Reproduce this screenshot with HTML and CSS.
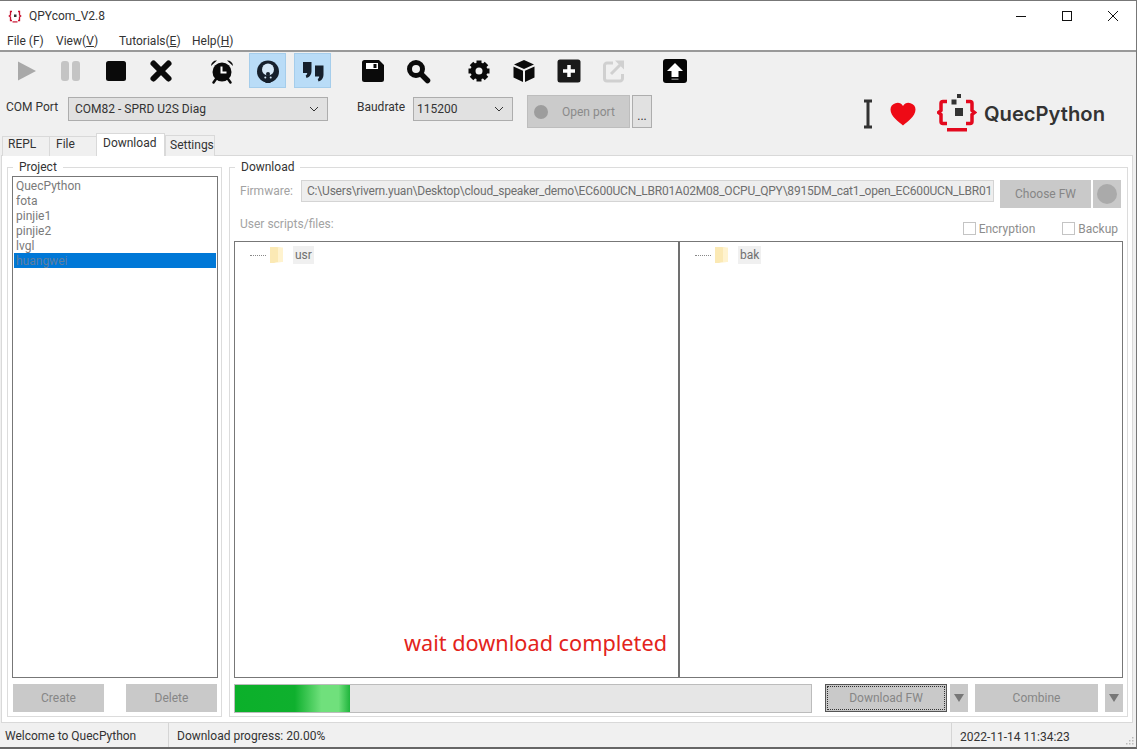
FILE: index.html
```html
<!DOCTYPE html>
<html lang="en">
<head>
    <meta charset="UTF-8">
    <title>QPYcom_V2.8</title>
    <link rel="stylesheet" href="styles.css">
</head>
<body>
    <div class="window">
        <div class="titlebar">
            <svg class="app-icon" width="14" height="14" viewBox="0 0 14 14">
                <path d="M4 2.500H2.500V6L1.300 7l1.200 1V11.500H4M10 2.500h1.500V6l1.200 1-1.200 1v3.500H10" fill="none" stroke="#c8102e" stroke-width="1.300"/>
                <rect x="6" y="5.500" width="2.500" height="2.500" fill="#333"/>
                <rect x="4.500" y="12.300" width="5" height="1.200" fill="#c8102e"/>
            </svg>
            <span class="app-title">QPYcom_V2.8</span>
            <div class="win-buttons">
                <svg width="12" height="12" viewBox="0 0 12 12"><path d="M1 6.500h10" stroke="#111" stroke-width="1"/></svg>
                <svg width="12" height="12" viewBox="0 0 12 12"><rect x="1.500" y="1.500" width="9" height="9" fill="none" stroke="#111"/></svg>
                <svg width="12" height="12" viewBox="0 0 12 12"><path d="M1 1l10 10M11 1L1 11" stroke="#111" stroke-width="1"/></svg>
            </div>
        </div>

        <div class="menubar">
            <span class="menu-file">File (F)</span>
            <span class="menu-view">View(<u>V</u>)</span>
            <span class="menu-tut">Tutorials(<u>E</u>)</span>
            <span class="menu-help">Help(<u>H</u>)</span>
        </div>

        <div class="toolbar">
            <div class="tool">
                <svg width="30" height="30" viewBox="0 0 30 30"><path d="M6 5.500L24 15 6 24.500z" fill="#a9a9a9"/></svg>
            </div>
            <div class="tool tool-pause">
                <svg width="30" height="30" viewBox="0 0 30 30"><rect x="5" y="5" width="8" height="20" rx="3" fill="#c4c4c4"/><rect x="16" y="5" width="8" height="20" rx="3" fill="#c4c4c4"/></svg>
            </div>
            <div class="tool">
                <svg width="30" height="30" viewBox="0 0 30 30"><rect x="5" y="5" width="20" height="20" rx="2.500" fill="#0a0a0a"/></svg>
            </div>
            <div class="tool">
                <svg width="30" height="30" viewBox="0 0 30 30"><path d="M7.500 7.500l15 15M22.500 7.500l-15 15" stroke="#0a0a0a" stroke-width="6" stroke-linecap="round"/></svg>
            </div>
            <div class="tool gap">
                <svg width="30" height="30" viewBox="0 0 30 30">
                    <circle cx="15" cy="16" r="9.500" fill="#0a0a0a"/>
                    <path d="M14.500 10.500v6h5" fill="none" stroke="#fff" stroke-width="2"/>
                    <path d="M4 10A5.500 5.500 0 0 1 10 4.500zM26 10A5.500 5.500 0 0 0 20 4.500z" fill="#0a0a0a"/>
                    <path d="M9 23l-2.500 3.500M21 23l2.500 3.500" stroke="#0a0a0a" stroke-width="2.500" stroke-linecap="round"/>
                </svg>
            </div>
            <div class="tool active tool-face">
                <svg width="30" height="30" viewBox="0 0 30 30">
                    <circle cx="15" cy="15.500" r="11" fill="#16202c"/>
                    <circle cx="15" cy="13.500" r="6" fill="#d5e8f7"/>
                    <circle cx="15" cy="18" r="2" fill="#16202c"/>
                    <path d="M10.500 25l2-4.500h5l2 4.500-2.500 2h-4z" fill="#16202c"/>
                    <circle cx="12.300" cy="21.500" r="1" fill="#d5e8f7"/>
                    <circle cx="17.700" cy="21.500" r="1" fill="#d5e8f7"/>
                </svg>
            </div>
            <div class="tool active tool-quote">
                <svg width="30" height="30" viewBox="0 0 30 30">
                    <path d="M5 6h8.500v9c0 3-1.500 6-5 7l-.8-2.500c1-.5 1.500-1.500 1.500-2.500H5z" fill="#16202c"/>
                    <path d="M17 9.500h8.500v9c0 3-1.500 6-5 7l-.8-2.500c1-.5 1.500-1.500 1.500-2.500H17z" fill="#16202c"/>
                </svg>
            </div>
            <div class="tool gap">
                <svg width="30" height="30" viewBox="0 0 30 30">
                    <path d="M6.500 4h14.500l5 5v14.500a2.500 2.500 0 0 1-2.500 2.500h-17A2.500 2.500 0 0 1 4 23.500v-17A2.500 2.500 0 0 1 6.500 4z" fill="#0a0a0a"/>
                    <rect x="8" y="7" width="12" height="6" fill="#fff"/>
                    <rect x="15.500" y="8" width="3" height="4" fill="#0a0a0a"/>
                </svg>
            </div>
            <div class="tool">
                <svg width="30" height="30" viewBox="0 0 30 30">
                    <circle cx="13" cy="13" r="6.500" fill="none" stroke="#0a0a0a" stroke-width="5"/>
                    <path d="M18.500 18.500l6 6" stroke="#0a0a0a" stroke-width="5.500" stroke-linecap="round"/>
                </svg>
            </div>
            <div class="tool gap">
                <svg width="30" height="30" viewBox="0 0 30 30">
                    <circle cx="15" cy="15" r="6" fill="none" stroke="#0a0a0a" stroke-width="5"/>
                    <g stroke="#0a0a0a" stroke-width="5">
                        <path d="M15 4.500v4M15 21.500v4M4.500 15h4M21.500 15h4M7.500 7.500l3 3M19.500 19.500l3 3M22.500 7.500l-3 3M10.500 19.500l-3 3"/>
                    </g>
                </svg>
            </div>
            <div class="tool">
                <svg width="30" height="30" viewBox="0 0 30 30">
                    <path d="M15 4l10 4.500L15 13 5 8.500z" fill="#0a0a0a"/>
                    <path d="M4.500 10.500l9.500 4.300V26L4.500 21.500zM25.500 10.500L16 14.800V26l9.500-4.500z" fill="#0a0a0a"/>
                </svg>
            </div>
            <div class="tool">
                <svg width="30" height="30" viewBox="0 0 30 30">
                    <rect x="3.500" y="3.500" width="23" height="23" rx="2.500" fill="#1a1a1a"/>
                    <path d="M15 9v12M9 15h12" stroke="#fff" stroke-width="3.500"/>
                </svg>
            </div>
            <div class="tool">
                <svg width="30" height="30" viewBox="0 0 30 30">
                    <path d="M14 7H8a2.500 2.500 0 0 0-2.500 2.500v13A2.500 2.500 0 0 0 8 25h13a2.500 2.500 0 0 0 2.500-2.500V18" fill="none" stroke="#d0d0d0" stroke-width="3"/>
                    <path d="M12 18l9-9" stroke="#d0d0d0" stroke-width="3"/>
                    <path d="M16 4.500h9v9z" fill="#d0d0d0"/>
                </svg>
            </div>
            <div class="tool gap">
                <svg width="30" height="30" viewBox="0 0 30 30">
                    <rect x="3" y="3" width="24" height="24" rx="3" fill="#050505"/>
                    <path d="M15 7l8 8h-4.500v6h-7v-6H7z" fill="#fff"/>
                    <rect x="11.500" y="22.500" width="7" height="1.500" fill="#777"/>
                </svg>
            </div>
        </div>

        <div class="portbar">
            <span class="port-label com-label">COM Port</span>
            <div class="combo combo-port">COM82 - SPRD U2S Diag
                <svg width="10" height="6" viewBox="0 0 10 6"><path d="M1 1l4 4 4-4" fill="none" stroke="#333"/></svg>
            </div>
            <span class="port-label baud-label">Baudrate</span>
            <div class="combo combo-baud">115200
                <svg width="10" height="6" viewBox="0 0 10 6"><path d="M1 1l4 4 4-4" fill="none" stroke="#333"/></svg>
            </div>
            <div class="btn-open"><span class="dot"></span>Open port</div>
            <div class="btn-more">...</div>
            <div class="brand">
                <svg class="brand-cursor" width="10" height="30" viewBox="0 0 10 30"><path d="M1 2h8M1 28h8M5 2v26" stroke="#333" stroke-width="3"/></svg>
                <svg class="brand-heart" width="26" height="24" viewBox="0 0 26 24"><path d="M13 23.500C9 20 .5 14.500.5 7.500A6.800 6.800 0 0 1 13 4a6.800 6.800 0 0 1 12.500 3.500C25.500 14.500 17 20 13 23.500z" fill="#ee0a16"/></svg>
                <svg class="brand-logo" width="40" height="38" viewBox="0 0 40 38">
                    <path d="M10 7.500H6A2 2 0 0 0 4 9.500v7L1.500 18.500 4 20.500v7a2 2 0 0 0 2 2h4M29 7.500h4a2 2 0 0 1 2 2v7l2.500 2L35 20.500v7a2 2 0 0 1-2 2h-4" fill="none" stroke="#e3091e" stroke-width="3.500"/>
                    <rect x="10" y="34" width="20" height="3.500" fill="#e3091e"/>
                    <rect x="20" y="0" width="4" height="4" fill="#333"/>
                    <rect x="14.500" y="5.500" width="5" height="5" fill="#333"/>
                    <rect x="18" y="14" width="8" height="8" fill="#333"/>
                </svg>
                <span class="brand-name">QuecPython</span>
            </div>
        </div>

        <div class="tabs">
            <span class="tab tab-repl">REPL</span>
            <span class="tab tab-file">File</span>
            <span class="tab tab-on">Download</span>
            <span class="tab tab-settings">Settings</span>
        </div>

        <div class="panel">
            <fieldset class="group group-project">
                <legend>Project</legend>
                <ul class="project-list">
                    <li>QuecPython</li>
                    <li>fota</li>
                    <li>pinjie1</li>
                    <li>pinjie2</li>
                    <li>lvgl</li>
                    <li class="selected">huangwei</li>
                </ul>
                <div class="project-actions">
                    <div class="btn btn-project">Create</div>
                    <div class="btn btn-project">Delete</div>
                </div>
            </fieldset>

            <fieldset class="group group-download">
                <legend>Download</legend>
                <div class="fw-row">
                    <span class="muted fw-label">Firmware:</span>
                    <div class="fw-path">C:\Users\rivern.yuan\Desktop\cloud_speaker_demo\EC600UCN_LBR01A02M08_OCPU_QPY\8915DM_cat1_open_EC600UCN_LBR01</div>
                    <div class="btn btn-choose">Choose FW</div>
                    <div class="btn btn-round"><span class="dot dot-round"></span></div>
                </div>
                <div class="opts-row">
                    <span class="muted scripts-label">User scripts/files:</span>
                    <label class="check check-enc"><span class="box"></span>Encryption</label>
                    <label class="check check-bak"><span class="box"></span>Backup</label>
                </div>
                <div class="trees">
                    <div class="tree">
                        <div class="tree-item">
                            <span class="dots"></span>
                            <svg width="16" height="18" viewBox="0 0 16 18"><path d="M1 1h7l5 1v14l-6 .5L5 17H1z" fill="#fbe9b4"/><path d="M9 1.500h5v14.500H9z" fill="#fff3cf"/></svg>
                            <span class="tree-name">usr</span>
                        </div>
                    </div>
                    <div class="tree tree-right">
                        <div class="tree-item">
                            <span class="dots"></span>
                            <svg width="16" height="18" viewBox="0 0 16 18"><path d="M1 1h7l5 1v14l-6 .5L5 17H1z" fill="#fbe9b4"/><path d="M9 1.500h5v14.500H9z" fill="#fff3cf"/></svg>
                            <span class="tree-name">bak</span>
                        </div>
                    </div>
                    <div class="wait-note">wait download completed</div>
                </div>
                <div class="actions-row">
                    <div class="progress"><div class="progress-fill" style="width: 20%"></div></div>
                    <div class="btn btn-download"><span class="focus-ring">Download FW</span></div>
                    <div class="btn btn-drop"><span class="arrow"></span></div>
                    <div class="btn btn-combine">Combine</div>
                    <div class="btn btn-drop"><span class="arrow"></span></div>
                </div>
            </fieldset>
        </div>

        <div class="statusbar">
            <span class="status-welcome">Welcome to QuecPython</span>
            <span class="status-progress">Download progress: 20.00%</span>
            <span class="status-time">2022-11-14 11:34:23</span>
            <svg class="grip" width="10" height="10" viewBox="0 0 10 10"><path d="M7 1h1.500v1.500H7zM4 4h1.500v1.500H4zM7 4h1.500v1.500H7zM1 7h1.500v1.500H1zM4 7h1.500v1.500H4zM7 7h1.500v1.500H7z" fill="#bbb"/></svg>
        </div>
    </div>
</body>
</html>
```

FILE: styles.css
```css
* {
    box-sizing: border-box;
}

body {
    margin: 0;
    background-color: #fff;
    font-family: 'Roboto', sans-serif;
    font-size: 12px;
    color: #333;
}

.window {
    width: 1137px;
    height: 749px;
    display: flex;
    flex-direction: column;
    border-top: 1px solid #777;
    border-right: 1px solid #777;
    border-bottom: 2px solid #666;
    background-color: #f0f0f0;
    overflow: hidden;
}

.titlebar {
    height: 29px;
    flex: none;
    display: flex;
    align-items: center;
    padding-left: 8px;
    background-color: #fff;
}

.app-title {
    margin-left: 7px;
}

.win-buttons {
    margin-left: auto;
    margin-right: 17px;
    display: flex;
    gap: 34px;
}

.menubar {
    height: 22px;
    flex: none;
    display: flex;
    align-items: center;
    background-color: #fff;
    border-bottom: 2px solid #999;
    padding-left: 7px;
    padding-top: 2px;
}

.menu-file {
    width: 49px;
}

.menu-view {
    width: 63px;
}

.menu-tut {
    width: 73px;
}

.toolbar {
    height: 37px;
    flex: none;
    display: flex;
    padding: 1px 0 0 4px;
}

.tool {
    width: 45px;
    height: 35px;
    display: flex;
    align-items: center;
    justify-content: center;
}

.tool-pause {
    margin-left: -1px;
}

.tool.gap {
    margin-left: 16px;
}

.tool.active {
    width: 37px;
    margin: 0 4px;
    background-color: #b9dcf7;
    border: 1px solid #a5cdeb;
}

.tool.tool-face {
    margin-left: 5px;
}

.tool.tool-quote {
    margin-right: 3px;
}

.portbar {
    height: 45px;
    flex: none;
    display: flex;
    align-items: flex-start;
    padding: 7px 0 0 6px;
}

.port-label {
    line-height: 23px;
}

.com-label {
    width: 62px;
}

.combo {
    height: 24px;
    margin-top: 1px;
    display: flex;
    align-items: center;
    justify-content: space-between;
    padding: 0 8px 0 6px;
    background-color: #e1e1e1;
    border: 1px solid #adadad;
}

.combo-port {
    width: 260px;
}

.baud-label {
    width: 56px;
    margin-left: 29px;
}

.combo-baud {
    width: 100px;
    padding-left: 3px;
}

.btn-open {
    width: 103px;
    height: 33px;
    margin-left: 14px;
    margin-top: -1px;
    display: flex;
    align-items: center;
    padding-left: 6px;
    background-color: #cbcbcb;
    color: #8a8a8a;
    border: 1px solid #bdbdbd;
}

.dot {
    width: 14px;
    height: 14px;
    margin-right: 14px;
    border-radius: 50%;
    background-color: #9d9d9d;
}

.btn-more {
    width: 20px;
    height: 33px;
    margin-left: 2px;
    margin-top: -1px;
    padding-top: 13px;
    text-align: center;
    background-color: #e1e1e1;
    border: 1px solid #adadad;
}

.brand {
    margin-left: auto;
    margin-right: 31px;
    margin-top: -1px;
    display: flex;
    align-items: center;
}

.brand-heart {
    margin-left: 17px;
}

.brand-logo {
    margin-left: 21px;
    margin-top: -1px;
}

.brand-name {
    margin-left: 7px;
    font-family: 'Inter', sans-serif;
    font-size: 20.2px;
    font-weight: 600;
    color: #333;
}

.tabs {
    height: 22px;
    flex: none;
    display: flex;
    align-items: flex-end;
    padding-left: 2px;
    margin-bottom: -1px;
    position: relative;
    z-index: 1;
}

.tab {
    height: 20px;
    padding-left: 5px;
    line-height: 15px;
    background-color: #f0f0f0;
    border: 1px solid #d9d9d9;
    border-bottom: none;
    margin-right: -1px;
}

.tab-repl {
    width: 48px;
}

.tab-file {
    width: 48px;
    padding-left: 6px;
}

.tab-on {
    width: 69px;
    height: 23px;
    padding-top: 2px;
    padding-left: 6px;
    background-color: #fff;
}

.tab-settings {
    width: 50px;
    height: 21px;
    margin-left: 1px;
    padding-left: 4px;
    padding-top: 2px;
}

.panel {
    flex: 1;
    min-height: 0;
    margin: 0 3px 0 1px;
    display: flex;
    gap: 7px;
    padding: 3px 4px 5px 5px;
    background-color: #fff;
    border: 1px solid #d9d9d9;
}

.group {
    margin: 0;
    min-width: 0;
    padding: 0 4px 4px;
    display: flex;
    flex-direction: column;
    border: 1px solid #dcdcdc;
    background-color: #fff;
}

.group legend {
    margin-left: 1px;
    padding: 0 6px;
    line-height: 16px;
}

.group-project {
    width: 215px;
    flex: none;
    padding-top: 1px;
    padding-right: 3px;
}

.group-download {
    flex: 1;
    padding-top: 5px;
}

.project-list {
    flex: 1;
    margin: 0;
    padding: 1px;
    list-style: none;
    border: 1px solid #777;
    color: #7a7a7a;
}

.project-list li {
    height: 15px;
    line-height: 17px;
    padding-left: 2px;
}

.project-list .selected {
    background-color: #0078d7;
    color: #5f7f9f;
}

.project-actions {
    margin-top: 6px;
    display: flex;
    justify-content: space-between;
    padding: 0 1px;
}

.btn {
    height: 28px;
    display: flex;
    align-items: center;
    justify-content: center;
    background-color: #c9c9c9;
    color: #868686;
}

.btn-project {
    width: 91px;
}

.fw-row {
    display: flex;
    align-items: flex-start;
    padding-left: 6px;
}

.muted {
    color: #a3a3a3;
}

.fw-label {
    width: 61px;
    line-height: 22px;
}

.fw-path {
    width: 693px;
    height: 22px;
    line-height: 20px;
    padding-left: 5px;
    white-space: nowrap;
    overflow: hidden;
    letter-spacing: -0.2px;
    background-color: #eee;
    border: 1px solid #d4d4d4;
    color: #6f6f6f;
}

.btn-choose {
    width: 91px;
    margin-left: 6px;
}

.btn-round {
    width: 28px;
    margin-left: 2px;
}

.dot-round {
    width: 20px;
    height: 20px;
    margin: 0;
    background-color: #aaa;
}

.opts-row {
    height: 33px;
    display: flex;
    align-items: center;
    padding-left: 6px;
}

.scripts-label {
    margin-top: -2px;
}

.check {
    display: flex;
    align-items: center;
    margin-top: 8px;
    color: #8d8d8d;
}

.check-enc {
    margin-left: auto;
}

.check-bak {
    margin-left: 27px;
    margin-right: 5px;
}

.box {
    width: 13px;
    height: 13px;
    margin-right: 3px;
    background-color: #fff;
    border: 1px solid #c4c4c4;
}

.trees {
    flex: 1;
    display: flex;
    position: relative;
    min-height: 0;
    border: 1px solid #777;
}

.tree {
    width: 443px;
    padding: 4px 0 0 15px;
}

.tree-right {
    flex: 1;
    border-left: 2px solid #707070;
}

.tree-item {
    display: flex;
    align-items: center;
    height: 18px;
}

.tree-item svg {
    margin-left: 3px;
}

.dots {
    width: 16px;
    border-top: 1px dotted #888;
}

.tree-name {
    margin-left: 8px;
    padding: 0 2px;
    line-height: 18px;
    background-color: #f0f0f0;
    color: #6f6f6f;
}

.wait-note {
    position: absolute;
    left: 169px;
    top: 387px;
    font-family: 'Noto Sans', sans-serif;
    font-size: 21.7px;
    line-height: 28px;
    color: #e3231b;
}

.actions-row {
    height: 28px;
    margin-top: 6px;
    display: flex;
    align-items: flex-start;
}

.progress {
    width: 578px;
    height: 29px;
    margin-right: 13px;
    background-color: #e6e6e6;
    border: 1px solid #bcbcbc;
}

.progress-fill {
    height: 100%;
    background: linear-gradient(90deg, #0bb02a 0, #0fb02e 52%, #70e07c 75%, #70e07c 90%, #1fb53c 100%);
}

.btn-download {
    width: 122px;
    border: 1px solid #555;
    padding: 1px;
}

.focus-ring {
    width: 100%;
    height: 100%;
    display: flex;
    align-items: center;
    justify-content: center;
    border: 1px dotted #333;
}

.btn-drop {
    width: 18px;
    margin-left: 3px;
}

.btn-combine {
    width: 123px;
    margin-left: 7px;
}

.btn-combine + .btn-drop {
    margin-left: 7px;
}

.arrow {
    width: 0;
    height: 0;
    border-left: 5px solid transparent;
    border-right: 5px solid transparent;
    border-top: 8px solid #777;
}

.statusbar {
    height: 24px;
    flex: none;
    display: flex;
    align-items: center;
    color: #333;
    position: relative;
}

.status-welcome {
    width: 169px;
    padding: 3px 0 0 5px;
    border-right: 1px solid #d5d5d5;
    line-height: 21px;
}

.status-progress {
    width: 783px;
    padding: 3px 0 0 8px;
    border-right: 1px solid #d5d5d5;
    line-height: 21px;
}

.status-time {
    padding: 3px 0 0 8px;
}

.grip {
    position: absolute;
    right: 1px;
    bottom: 1px;
}
```
